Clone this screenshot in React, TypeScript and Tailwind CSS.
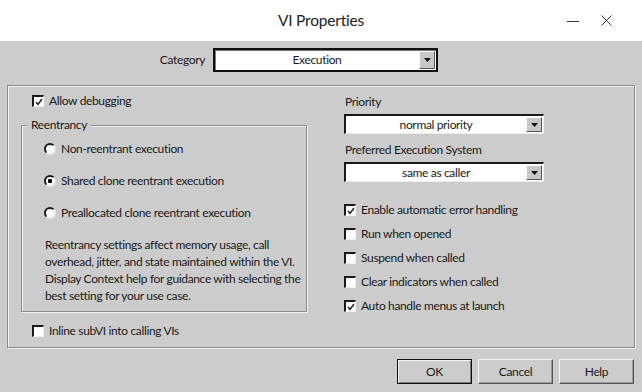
import React from "react";

function Check() {
  return (
    <svg width="8" height="8" viewBox="0 0 8 8" className="block">
      <polyline points="1,4 3,6.5 7,1" fill="none" stroke="#111" strokeWidth="1.3" />
    </svg>
  );
}

function CheckBox({ checked }: { checked?: boolean }) {
  return (
    <div className="w-[12px] h-[12px] shrink-0 bg-white border-t-2 border-l-2 border-t-[#1a1a1a] border-l-[#1a1a1a] border-b border-r border-b-[#f0f0f0] border-r-[#f0f0f0] flex items-center justify-center">
      {checked ? <Check /> : null}
    </div>
  );
}

function CheckRow({ checked, label }: { checked?: boolean; label: string }) {
  return (
    <div className="flex items-center gap-[5px] h-[14px] whitespace-nowrap">
      <CheckBox checked={checked} />
      <span className="relative -top-[1px]">{label}</span>
    </div>
  );
}

function Radio({ checked, label }: { checked?: boolean; label: string }) {
  return (
    <div className="flex items-center gap-[5px] h-[14px] whitespace-nowrap">
      <div className="w-[12px] h-[12px] shrink-0 rounded-full bg-white border-2 border-t-[#1a1a1a] border-l-[#1a1a1a] border-b-[#e8e8e8] border-r-[#e8e8e8] flex items-center justify-center">
        {checked ? <div className="w-[4px] h-[4px] bg-black rounded-[1px]" /> : null}
      </div>
      <span className="relative -top-[1px]">{label}</span>
    </div>
  );
}

function Arrow() {
  return (
    <div className="w-[16px] self-stretch my-[1px] mr-[1px] bg-[#c8c8c8] border-t border-l border-t-white border-l-white border-b border-r border-b-[#555] border-r-[#555] flex items-center justify-center">
      <svg width="7" height="4" viewBox="0 0 7 4" className="block">
        <polygon points="0,0 7,0 3.5,4" fill="#111" />
      </svg>
    </div>
  );
}

function Select({ value }: { value: string }) {
  return (
    <div className="w-[200px] h-[20px] flex bg-white border-t-2 border-l-2 border-t-[#1a1a1a] border-l-[#1a1a1a] border-b border-r border-b-[#eeeeee] border-r-[#eeeeee]">
      <div className="flex-1 flex items-center justify-center pb-[1px]">{value}</div>
      <Arrow />
    </div>
  );
}

function Button({ label, def }: { label: string; def?: boolean }) {
  return (
    <div
      className={
        "w-[75px] h-[25px] flex items-center justify-center pb-[1px] bg-[#cccccc] " +
        (def
          ? "border border-[#111] shadow-[inset_1px_1px_0_#f4f4f4,inset_-1px_-1px_0_#777]"
          : "border border-t-[#f4f4f4] border-l-[#f4f4f4] border-b-[#555] border-r-[#555] shadow-[inset_-1px_-1px_0_#999]")
      }
    >
      {label}
    </div>
  );
}

export default function App() {
  return (
    <div className="w-[642px] h-[392px] bg-[#cccccc] flex flex-col text-[12px] tracking-[-0.35px] leading-[17px] text-[#1a1a1a] font-[Lato,sans-serif] overflow-hidden">
      <div className="h-[41px] bg-white grid grid-cols-[1fr_auto_1fr] items-center shrink-0">
        <div />
        <div className="text-[15.5px] tracking-[-0.2px] text-[#222] pb-[1px]">VI Properties</div>
        <div className="flex justify-end items-center gap-[22px] pr-[30px]">
          <svg width="12" height="12" viewBox="0 0 12 12" className="block">
            <line x1="0" y1="6.5" x2="12" y2="6.5" stroke="#333" strokeWidth="1" />
          </svg>
          <svg width="11" height="11" viewBox="0 0 11 11" className="block">
            <line x1="0.5" y1="0.5" x2="10.5" y2="10.5" stroke="#333" strokeWidth="1" />
            <line x1="10.5" y1="0.5" x2="0.5" y2="10.5" stroke="#333" strokeWidth="1" />
          </svg>
        </div>
      </div>

      <div className="flex items-center h-[24px] mt-[7px]">
        <div className="w-[205px] text-right pb-[2px]">Category</div>
        <div className="ml-[8px] w-[225px] h-[24px] flex bg-white border-2 border-[#111] shadow-[inset_1px_1px_0_#777]">
          <div className="flex-1 flex items-center justify-center pb-[2px]">Execution</div>
          <Arrow />
        </div>
      </div>

      <div className="mx-[7px] mt-[13px] h-[263px] border border-[#8a8a8a] shadow-[inset_1px_1px_0_#f2f2f2,1px_1px_0_#f2f2f2] flex">
        <div className="pl-[13px] pt-[8px] w-[300px] flex flex-col">
          <div className="pl-[11px]">
            <CheckRow checked label="Allow debugging" />
          </div>
          <div className="relative mt-[17px] w-[286px] h-[187px] border border-[#8a8a8a] shadow-[inset_1px_1px_0_#f2f2f2,1px_1px_0_#f2f2f2] flex flex-col">
            <div className="absolute left-[5px] -top-[10px] px-[4px] bg-[#cccccc]">Reentrancy</div>
            <div className="pl-[22px] pt-[16px] flex flex-col gap-[18px]">
              <Radio label="Non-reentrant execution" />
              <Radio checked label="Shared clone reentrant execution" />
              <Radio label="Preallocated clone reentrant execution" />
            </div>
            <div className="pl-[23px] pt-[16px] pr-[4px] whitespace-nowrap">
              Reentrancy settings affect memory usage, call
              <br />
              overhead, jitter, and state maintained within the VI.
              <br />
              Display Context help for guidance with selecting the
              <br />
              best setting for your use case.
            </div>
          </div>
          <div className="pl-[11px] mt-[12px]">
            <CheckRow label="Inline subVI into calling VIs" />
          </div>
        </div>

        <div className="ml-[36px] pt-[7px] flex flex-col">
          <div className="pl-[1px]">Priority</div>
          <div className="mt-[4px]">
            <Select value="normal priority" />
          </div>
          <div className="mt-[7px] pl-[1px]">Preferred Execution System</div>
          <div className="mt-[4px]">
            <Select value="same as caller" />
          </div>
          <div className="mt-[21px] flex flex-col gap-[10px]">
            <CheckRow checked label="Enable automatic error handling" />
            <CheckRow label="Run when opened" />
            <CheckRow label="Suspend when called" />
            <CheckRow label="Clear indicators when called" />
            <CheckRow checked label="Auto handle menus at launch" />
          </div>
        </div>
      </div>

      <div className="flex justify-end gap-[6px] pr-[8px] mt-[11px]">
        <Button def label="OK" />
        <Button label="Cancel" />
        <Button label="Help" />
      </div>
    </div>
  );
}
